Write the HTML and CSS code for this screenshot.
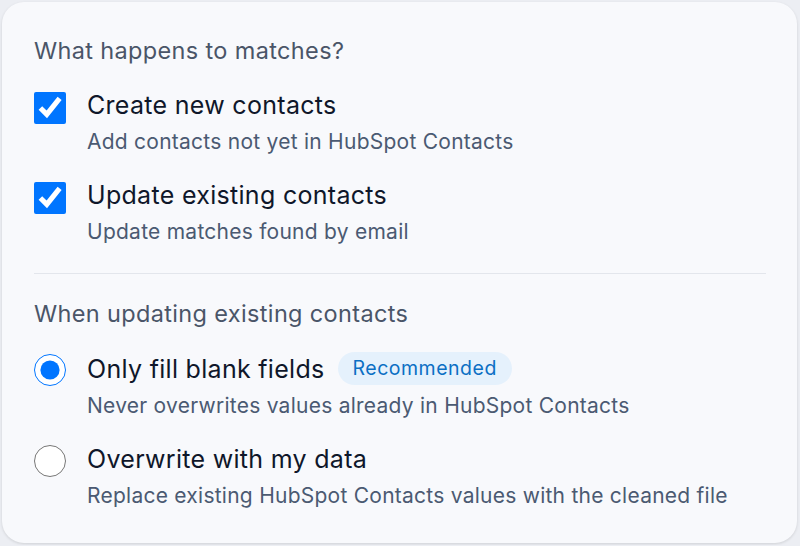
FILE: index.html
```html
<!DOCTYPE html>
<html>
<head>
<meta charset="utf-8">
<link rel="stylesheet" href="styles.css">
</head>
<body>
<div class="card">
  <div class="heading">What happens to matches?</div>
  <label class="option">
    <input type="checkbox" class="ctl" checked>
    <div class="text">
      <div class="label">Create new contacts</div>
      <div class="desc">Add contacts not yet in HubSpot Contacts</div>
    </div>
  </label>
  <label class="option">
    <input type="checkbox" class="ctl" checked>
    <div class="text">
      <div class="label">Update existing contacts</div>
      <div class="desc">Update matches found by email</div>
    </div>
  </label>
  <div class="divider"></div>
  <div class="heading heading-second">When updating existing contacts</div>
  <label class="option">
    <input type="radio" name="mode" class="ctl radio" checked>
    <div class="text">
      <div class="label">Only fill blank fields <span class="badge">Recommended</span></div>
      <div class="desc">Never overwrites values already in HubSpot Contacts</div>
    </div>
  </label>
  <label class="option">
    <input type="radio" name="mode" class="ctl radio">
    <div class="text">
      <div class="label">Overwrite with my data</div>
      <div class="desc">Replace existing HubSpot Contacts values with the cleaned file</div>
    </div>
  </label>
</div>
</body>
</html>
```
FILE: styles.css
```css
html, body {
  margin: 0;
  padding: 0;
  background: #eceef3;
}
body {
  padding: 2px;
  font-family: Inter, "DejaVu Sans", sans-serif;
}
.card {
  box-sizing: border-box;
  width: 795px;
  height: 541px;
  display: flex;
  flex-direction: column;
  background: #f8f9fc;
  border-radius: 22px;
  padding: 34px 31px 0 32px;
  box-shadow: 0 1px 3px rgba(0,0,0,0.12);
}
.heading {
  font-size: 23.5px;
  letter-spacing: 0.35px;
  line-height: 30px;
  color: #4a5568;
  margin-bottom: 23px;
}
.heading-second {
  margin-bottom: 23px;
}
.option {
  display: flex;
  align-items: flex-start;
  gap: 21px;
  margin-bottom: 22px;
}
.ctl {
  width: 32px;
  height: 32px;
  margin: 3px 0 0 0;
  flex: none;
}
.radio {
  margin-top: 2px;
}
.label {
  font-size: 25px;
  letter-spacing: 0.3px;
  line-height: 32px;
  color: #0f172a;
  display: flex;
  align-items: center;
  gap: 13px;
}
.desc {
  margin-top: 6px;
  font-size: 21px;
  letter-spacing: 0.25px;
  line-height: 30px;
  color: #4b5a72;
}
.badge {
  display: inline-block;
  height: 33px;
  line-height: 33px;
  padding: 0 15px;
  border-radius: 17px;
  background: #e5f1fc;
  color: #0b6fc4;
  font-size: 19.5px;
  letter-spacing: 0.5px;
}
.divider {
  flex: none;
  height: 1px;
  background: #e3e6ec;
  margin: 4px 0 25px 0;
}
```
